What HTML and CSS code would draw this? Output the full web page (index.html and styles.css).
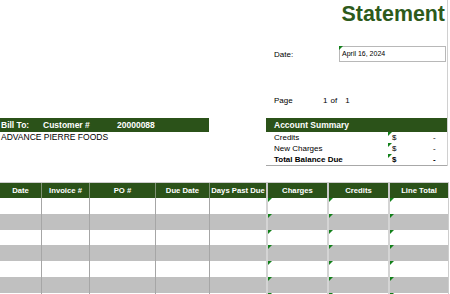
FILE: index.html
```html
<!DOCTYPE html>
<html lang="en">
<head>
<meta charset="utf-8">
<title>Statement</title>
<link rel="stylesheet" href="styles.css">
</head>
<body>
<div class="sheet">
  <div class="top">
    <h1 class="title">Statement</h1>

    <div class="meta">
      <div class="meta-row date-row">
        <span class="meta-label">Date:</span>
        <span class="date-box mark">April 16, 2024</span>
      </div>
      <div class="meta-row page-row">
        <span class="meta-label page-label">Page</span>
        <span class="page-cur">1</span>
        <span class="page-of">of</span>
        <span class="page-total">1</span>
      </div>
    </div>

    <div class="bars">
      <div class="bill">
        <div class="bar bill-bar">
          <span class="bill-to">Bill To:</span>
          <span class="cust-label">Customer #</span>
          <span class="cust-num">20000088</span>
        </div>
        <div class="bill-name">ADVANCE PIERRE FOODS</div>
      </div>

      <div class="summary">
        <div class="bar summary-bar">Account Summary</div>
        <div class="sum-row">
          <span class="sum-label">Credits</span>
          <span class="sum-cur mark">$</span>
          <span class="sum-val">-</span>
        </div>
        <div class="sum-row">
          <span class="sum-label">New Charges</span>
          <span class="sum-cur mark">$</span>
          <span class="sum-val">-</span>
        </div>
        <div class="sum-row sum-total">
          <span class="sum-label">Total Balance Due</span>
          <span class="sum-cur mark">$</span>
          <span class="sum-val">-</span>
        </div>
      </div>
    </div>
  </div>

  <div class="ledger">
    <div class="ledger-row ledger-head">
      <div class="cell">Date</div>
      <div class="cell">Invoice #</div>
      <div class="cell">PO #</div>
      <div class="cell">Due Date</div>
      <div class="cell">Days Past Due</div>
      <div class="cell money">Charges</div>
      <div class="cell money">Credits</div>
      <div class="cell money">Line Total</div>
    </div>

    <div class="ledger-row">
      <div class="cell"></div><div class="cell"></div><div class="cell"></div><div class="cell"></div><div class="cell"></div>
      <div class="cell money mark"></div><div class="cell money mark"></div><div class="cell money mark"></div>
    </div>
    <div class="ledger-row shaded">
      <div class="cell"></div><div class="cell"></div><div class="cell"></div><div class="cell"></div><div class="cell"></div>
      <div class="cell money mark"></div><div class="cell money mark"></div><div class="cell money mark"></div>
    </div>
    <div class="ledger-row">
      <div class="cell"></div><div class="cell"></div><div class="cell"></div><div class="cell"></div><div class="cell"></div>
      <div class="cell money mark"></div><div class="cell money mark"></div><div class="cell money mark"></div>
    </div>
    <div class="ledger-row shaded">
      <div class="cell"></div><div class="cell"></div><div class="cell"></div><div class="cell"></div><div class="cell"></div>
      <div class="cell money mark"></div><div class="cell money mark"></div><div class="cell money mark"></div>
    </div>
    <div class="ledger-row">
      <div class="cell"></div><div class="cell"></div><div class="cell"></div><div class="cell"></div><div class="cell"></div>
      <div class="cell money mark"></div><div class="cell money mark"></div><div class="cell money mark"></div>
    </div>
    <div class="ledger-row shaded">
      <div class="cell"></div><div class="cell"></div><div class="cell"></div><div class="cell"></div><div class="cell"></div>
      <div class="cell money mark"></div><div class="cell money mark"></div><div class="cell money mark"></div>
    </div>
    <div class="ledger-row">
      <div class="cell"></div><div class="cell"></div><div class="cell"></div><div class="cell"></div><div class="cell"></div>
      <div class="cell money mark"></div><div class="cell money mark"></div><div class="cell money mark"></div>
    </div>
  </div>
</div>
</body>
</html>
```

FILE: styles.css
```css
html, body {
  margin: 0;
  padding: 0;
  background: #ffffff;
}

body {
  font-family: "Liberation Sans", Arial, sans-serif;
  color: #000000;
  overflow: hidden;
}

.sheet {
  width: 450px;
  height: 294px;
  overflow: hidden;
}

/* upper block: title, date / page, bill-to and summary */
.top {
  width: 447px;
  border-right: 1px solid #d0d0d0;
}

.title {
  margin: 0;
  height: 28px;
  padding-right: 2px;
  font-size: 21.4px;
  line-height: 28px;
  font-weight: bold;
  text-align: right;
  color: #2d5a1b;
}

.meta {
  margin-top: 18px;
  padding-left: 274px;
}

.meta-row {
  display: flex;
  align-items: center;
  font-size: 8px;
}

.date-row {
  height: 16px;
}

.meta-label {
  width: 65px;
  flex: none;
}

.date-box {
  position: relative;
  width: 107px;
  height: 16px;
  box-sizing: border-box;
  border: 1px solid #b8b8b8;
  padding-left: 2px;
  font-size: 7px;
  line-height: 14px;
}

.page-row {
  margin-top: 33px;
  height: 12px;
  line-height: 12px;
}

.page-label {
  width: 49px;
}

.page-of {
  margin-left: 3px;
}

.page-total {
  margin-left: 8px;
}

.bars {
  display: flex;
  margin-top: 11px;
}

.bar {
  height: 14px;
  line-height: 14px;
  background: #2b5219;
  color: #ffffff;
  font-size: 8.5px;
  font-weight: bold;
  white-space: nowrap;
}

.bill {
  width: 209px;
}

.bill-bar {
  display: flex;
  padding-left: 1px;
}

.bill-to {
  width: 42px;
}

.cust-label {
  width: 74px;
}

.bill-name {
  padding-left: 1px;
  font-size: 8.5px;
  line-height: 11px;
}

.summary {
  width: 181px;
  margin-left: 57px;
  border-bottom: 1px solid #a8a8a8;
}

.summary-bar {
  padding-left: 8px;
}

.sum-row {
  display: flex;
  height: 11px;
  line-height: 11px;
  font-size: 8px;
  padding-left: 8px;
}

.sum-label {
  width: 114px;
  flex: none;
}

.sum-cur {
  position: relative;
  width: 41px;
  padding-left: 4px;
  box-sizing: border-box;
  flex: none;
}

.sum-val {
  padding-left: 4px;
}

.sum-total {
  font-weight: bold;
}

/* transaction grid */
.ledger {
  width: 448px;
  margin-top: 16px;
  border-top: 1px solid #cdcdcd;
  border-right: 1px solid #cdcdcd;
}

.ledger-row {
  display: grid;
  grid-template-columns: 41px 48px 66px 54px 57px 61px 61px 60px;
  height: 15.8px;
}

.cell {
  position: relative;
  box-sizing: border-box;
  border-left: 1px solid #a6a6a6;
}

.cell:first-child {
  border-left: none;
}

.cell.money {
  border-left: 2px solid #d4d4d4;
}

.shaded {
  background: #c0c0c0;
}

.ledger-head {
  height: 15px;
  background: #2b5219;
  color: #ffffff;
  font-size: 7.7px;
  font-weight: bold;
  line-height: 15px;
  text-align: center;
  white-space: nowrap;
}

.ledger-head .cell {
  border-left-color: #7f9274;
}

.ledger-head .cell.money {
  border-left-color: #c9c9c9;
}

/* small green corner flag on input cells */
.mark::before {
  content: "";
  position: absolute;
  top: 0;
  left: 0;
  width: 0;
  height: 0;
  border-top: 4px solid #12801a;
  border-right: 4px solid transparent;
}

.date-box.mark::before {
  top: -1px;
  left: -1px;
}
```
